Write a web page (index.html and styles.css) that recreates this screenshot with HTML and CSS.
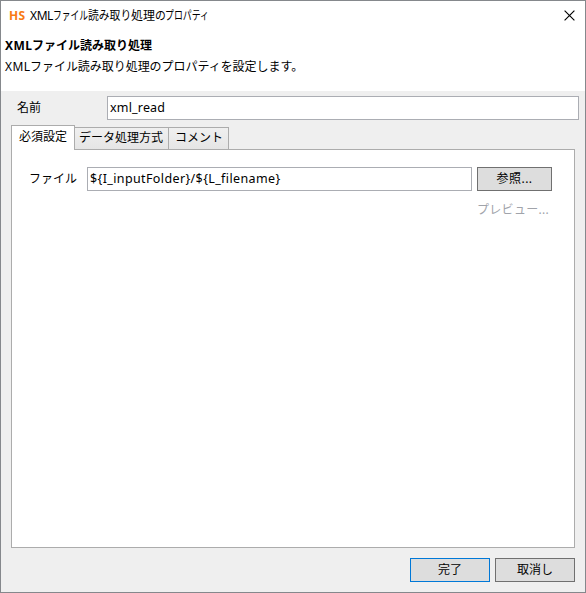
FILE: index.html
```html
<!DOCTYPE html>
<html lang="ja">
<head>
<meta charset="utf-8">
<title>XMLファイル読み取り処理のプロパティ</title>
<link rel="stylesheet" href="styles.css">
</head>
<body>
<div class="dialog">
  <header class="header">
    <div class="titlebar">
      <span class="logo">HS</span>
      <span class="title"><span class="t-xml">XML</span><span class="t-file"><i>ファイル</i></span><span class="t-read"><i>読み取り</i></span><span>処理</span><span class="t-no"><i>の</i></span><span class="t-prop"><i>プロパティ</i></span></span>
      <svg class="close" width="11" height="11" viewBox="0 0 11 11"><path d="M.6.6l9.8 9.8M10.4.6L.6 10.4" stroke="#000" stroke-width="1.15" fill="none"/></svg>
    </div>
    <h1><span class="xml-bold">XML</span>ファイル読み取り処理</h1>
    <p><span class="xml">XML</span>ファイル読み取り処理のプロパティを設定します。</p>
  </header>
  <div class="name-row">
    <label>名前</label>
    <div class="field name-field"><span class="name-value">xml_read</span></div>
  </div>
  <nav class="tabs">
    <div class="tab active">必須設定</div>
    <div class="tab data">データ処理方式</div>
    <div class="tab comment">コメント</div>
  </nav>
  <main class="panel">
    <div class="file-row">
      <label>ファイル</label>
      <div class="field"><span class="file-value">${I_inputFolder}/${L_filename}</span></div>
      <div class="button browse">参照...</div>
    </div>
    <div class="preview">プレビュー...</div>
  </main>
  <footer class="footer">
    <div class="button primary">完了</div>
    <div class="button">取消し</div>
  </footer>
</div>
</body>
</html>
```
FILE: styles.css
```css
* { box-sizing: border-box; }
body {
  margin: 0;
  font: 12px/18px "Noto Sans", "Noto Sans CJK JP", sans-serif;
  color: #000;
}
i { font-style: normal; display: inline-block; transform-origin: 0 50%; }
.dialog {
  width: 586px;
  height: 593px;
  border: 1px solid #85888c;
  background: #efefef;
  display: flex;
  flex-direction: column;
  white-space: nowrap;
  overflow: hidden;
}
.header { height: 90px; background: #fff; flex: none; }
.titlebar { height: 34px; display: flex; align-items: flex-start; padding: 6px 10px 0 8px; }
.logo { font: bold 12px/18px "Open Sans", sans-serif; color: #f87a14; width: 21px; letter-spacing: .4px; }
.title { display: flex; flex: 1; }
.title span { flex: none; }
.t-xml { width: 23px; letter-spacing: -.4px; }
.t-file { width: 35px; }
.t-file i { transform: scaleX(.73); }
.t-read { width: 43px; }
.t-read i { transform: scaleX(.9); }
.t-no { width: 10px; }
.t-no i { transform: scaleX(.9); }
.t-prop { width: 44px; }
.t-prop i { transform: scaleX(.74); }
.close { margin-top: 3px; }
h1, p { margin: 0; padding-left: 4px; font-size: 12px; line-height: 18px; }
h1 { margin-top: 2px; }
p { margin-top: 3px; letter-spacing: -.04px; }
.xml, .xml-bold { display: inline-block; width: 26px; letter-spacing: .4px; }
.xml { width: 25px; }
.xml-bold { width: 27px; }
.name-row { display: flex; align-items: center; height: 24px; margin-top: 5px; padding: 0 6px 0 16px; flex: none; }
.name-row label { width: 90px; }
.field { height: 24px; flex: 1; background: #fff; border: 1px solid #abadb3; padding: 2px; }
.name-value { font-size: 12.5px; letter-spacing: .18px; }
.file-value { font-size: 12.5px; letter-spacing: .38px; }
.tabs { display: flex; align-items: flex-end; margin: 5px 0 0 10px; height: 24px; flex: none; }
.tab {
  height: 22px;
  border: 1px solid #acacac;
  border-left: 0;
  border-bottom: 0;
  background: linear-gradient(#f0f0f0, #e5e5e5);
  padding: 1px 0 0 4px;
}
.active {
  width: 64px;
  height: 25px;
  margin-bottom: -1px;
  padding: 2px 0 0 7px;
  border-left: 1px solid #acacac;
  background: #fff;
  z-index: 1;
}
.data { width: 94px; }
.comment { width: 60px; padding-left: 6px; }
.panel { width: 564px; height: 399px; margin-left: 10px; background: #fff; border: 1px solid #acacac; padding: 17px 22px 0 17px; flex: none; }
.file-row { display: flex; align-items: center; gap: 5px; }
.file-row label { width: 53px; }
.button { width: 80px; height: 24px; background: #ddd; border: 1px solid #707070; text-align: center; line-height: 21px; }
.browse { width: 75px; letter-spacing: .5px; }
.preview { margin: 10px 0 0 448px; color: #a0a3aa; letter-spacing: .3px; }
.footer { display: flex; justify-content: flex-end; gap: 5px; padding: 10px 10px 0 0; }
.primary { border-color: #0078d7; }
```
